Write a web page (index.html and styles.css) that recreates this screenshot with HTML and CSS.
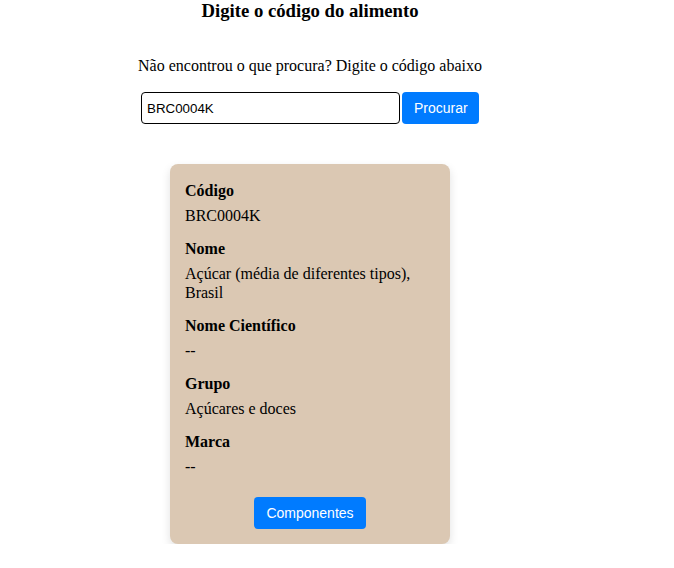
FILE: index.html
```html
<!DOCTYPE html>
<html lang="pt">
<head>
<meta charset="utf-8">
<title>Digite o código do alimento</title>
<link rel="stylesheet" href="styles.css">
</head>
<body>
<div class="page">
  <h1 class="title">Digite o código do alimento</h1>
  <p class="hint">Não encontrou o que procura? Digite o código abaixo</p>
  <form class="search">
    <input class="search-input" type="text" value="BRC0004K">
    <button class="btn" type="button">Procurar</button>
  </form>
  <div class="card">
    <div class="field">
      <div class="label">Código</div>
      <div class="value">BRC0004K</div>
    </div>
    <div class="field">
      <div class="label">Nome</div>
      <div class="value">Açúcar (média de diferentes tipos), Brasil</div>
    </div>
    <div class="field">
      <div class="label">Nome Científico</div>
      <div class="value">--</div>
    </div>
    <div class="field">
      <div class="label">Grupo</div>
      <div class="value">Açúcares e doces</div>
    </div>
    <div class="field">
      <div class="label">Marca</div>
      <div class="value">--</div>
    </div>
    <div class="card-actions">
      <button class="btn" type="button">Componentes</button>
    </div>
  </div>
</div>
</body>
</html>
```

FILE: styles.css
```css
html, body {
  margin: 0;
  padding: 0;
  background: #ffffff;
}

body {
  font-family: "Liberation Serif", "Times New Roman", serif;
  font-size: 16px;
  color: #000;
}

.page {
  width: 620px;
  display: flex;
  flex-direction: column;
  align-items: center;
}

.title {
  margin: 0;
  font-size: 18.72px;
  line-height: 22px;
  font-weight: bold;
}

.hint {
  margin: 34px 0 0;
  line-height: 19px;
}

.search {
  margin: 17px 0 0;
  display: flex;
  gap: 2px;
}

.search-input {
  box-sizing: border-box;
  width: 259px;
  height: 32px;
  border: 1px solid #000;
  border-radius: 4px;
  padding: 0 5px;
  font-family: "Liberation Sans", Arial, sans-serif;
  font-size: 13.33px;
  color: #000;
  background: #fff;
}

.btn {
  box-sizing: border-box;
  height: 32px;
  padding: 0 12px;
  border: none;
  border-radius: 4px;
  background: #007bff;
  color: #fff;
  font-family: "Liberation Sans", Arial, sans-serif;
  font-size: 14px;
}

.search .btn {
  width: 77px;
}

.card {
  box-sizing: border-box;
  width: 280px;
  margin-top: 40px;
  padding: 17px 15px 15px;
  background: #dbc8b3;
  border-radius: 8px;
  box-shadow: 0 4px 10px rgba(0, 0, 0, 0.12);
}

.field {
  margin-bottom: 14px;
}

.label {
  font-weight: bold;
  line-height: 19px;
  margin-bottom: 6px;
}

.value {
  line-height: 19px;
}

.card-actions {
  display: flex;
  justify-content: center;
  padding-top: 7px;
}

.card-actions .btn {
  width: 112px;
}
```
